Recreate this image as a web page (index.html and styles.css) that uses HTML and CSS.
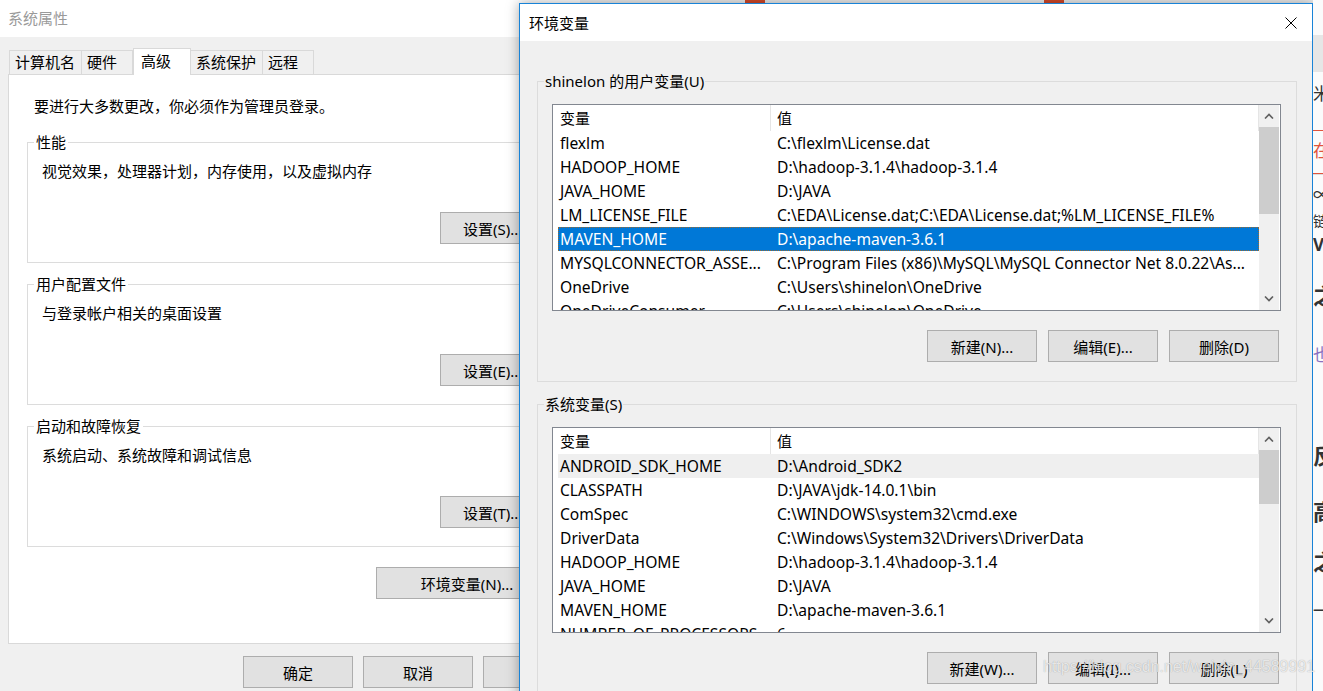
FILE: index.html
```html
<!DOCTYPE html>
<html lang="zh-CN">

<head>
    <meta charset="UTF-8">
    <title>环境变量</title>
    <link rel="stylesheet" href="styles.css">
</head>

<body>
    <div class="mark mark-a"></div>
    <div class="mark mark-b"></div>

    <!-- 系统属性 (background window) -->
    <section class="win sysprops">
        <div class="titlebar">系统属性</div>
        <div class="tabs">
            <span class="tab">计算机名</span>
            <span class="tab">硬件</span>
            <span class="tab on">高级</span>
            <span class="tab">系统保护</span>
            <span class="tab">远程</span>
        </div>
        <div class="panel">
            <p class="note">要进行大多数更改，你必须作为管理员登录。</p>

            <fieldset class="grp">
                <legend>性能</legend>
                <div class="grp-body">
                    <p class="desc">视觉效果，处理器计划，内存使用，以及虚拟内存</p>
                    <div class="btnrow"><button class="btn set">设置(S)...</button></div>
                </div>
            </fieldset>

            <fieldset class="grp">
                <legend>用户配置文件</legend>
                <div class="grp-body">
                    <p class="desc">与登录帐户相关的桌面设置</p>
                    <div class="btnrow"><button class="btn set">设置(E)...</button></div>
                </div>
            </fieldset>

            <fieldset class="grp">
                <legend>启动和故障恢复</legend>
                <div class="grp-body">
                    <p class="desc">系统启动、系统故障和调试信息</p>
                    <div class="btnrow"><button class="btn set">设置(T)...</button></div>
                </div>
            </fieldset>

            <div class="envrow"><button class="btn env">环境变量(N)...</button></div>
        </div>
        <div class="footer">
            <button class="btn">确定</button>
            <button class="btn">取消</button>
            <button class="btn apply">应用(A)</button>
        </div>
    </section>

    <!-- 环境变量 dialog -->
    <section class="win envdlg">
        <div class="dlg-title">
            <span>环境变量</span>
            <svg class="close" width="12" height="12" viewBox="0 0 12 12">
                <path d="M0.5 0.5 L11.5 11.5 M11.5 0.5 L0.5 11.5" stroke="#000" stroke-width="1" fill="none" />
            </svg>
        </div>
        <div class="dlg-body">
            <fieldset class="vars">
                <legend>shinelon 的用户变量(U)</legend>
                <div class="vars-body">
                    <div class="list user">
                        <div class="cols">
                            <div class="lrow head"><span>变量</span><span>值</span></div>
                            <div class="lrow"><span>flexlm</span><span>C:\flexlm\License.dat</span></div>
                            <div class="lrow"><span>HADOOP_HOME</span><span>D:\hadoop-3.1.4\hadoop-3.1.4</span></div>
                            <div class="lrow"><span>JAVA_HOME</span><span>D:\JAVA</span></div>
                            <div class="lrow"><span>LM_LICENSE_FILE</span><span>C:\EDA\License.dat;C:\EDA\License.dat;%LM_LICENSE_FILE%</span></div>
                            <div class="lrow sel"><span>MAVEN_HOME</span><span>D:\apache-maven-3.6.1</span></div>
                            <div class="lrow"><span>MYSQLCONNECTOR_ASSE...</span><span>C:\Program Files (x86)\MySQL\MySQL Connector Net 8.0.22\As...</span></div>
                            <div class="lrow"><span>OneDrive</span><span>C:\Users\shinelon\OneDrive</span></div>
                            <div class="lrow"><span>OneDriveConsumer</span><span>C:\Users\shinelon\OneDrive</span></div>
                        </div>
                        <div class="sb">
                            <div class="arrow"><svg width="10" height="6" viewBox="0 0 10 6"><path d="M1 5.5 L5 1.5 L9 5.5" stroke="#606060" stroke-width="1.6" fill="none" /></svg></div>
                            <div class="track"><div class="thumb t-user"></div></div>
                            <div class="arrow"><svg width="10" height="6" viewBox="0 0 10 6"><path d="M1 0.5 L5 4.5 L9 0.5" stroke="#606060" stroke-width="1.6" fill="none" /></svg></div>
                        </div>
                    </div>
                    <div class="btnrow dlg-btns">
                        <button class="btn">新建(N)...</button>
                        <button class="btn">编辑(E)...</button>
                        <button class="btn">删除(D)</button>
                    </div>
                </div>
            </fieldset>

            <fieldset class="vars sys">
                <legend>系统变量(S)</legend>
                <div class="vars-body">
                    <div class="list system">
                        <div class="cols">
                            <div class="lrow head"><span>变量</span><span>值</span></div>
                            <div class="lrow hover"><span>ANDROID_SDK_HOME</span><span>D:\Android_SDK2</span></div>
                            <div class="lrow"><span>CLASSPATH</span><span>D:\JAVA\jdk-14.0.1\bin</span></div>
                            <div class="lrow"><span>ComSpec</span><span>C:\WINDOWS\system32\cmd.exe</span></div>
                            <div class="lrow"><span>DriverData</span><span>C:\Windows\System32\Drivers\DriverData</span></div>
                            <div class="lrow"><span>HADOOP_HOME</span><span>D:\hadoop-3.1.4\hadoop-3.1.4</span></div>
                            <div class="lrow"><span>JAVA_HOME</span><span>D:\JAVA</span></div>
                            <div class="lrow"><span>MAVEN_HOME</span><span>D:\apache-maven-3.6.1</span></div>
                            <div class="lrow"><span>NUMBER_OF_PROCESSORS</span><span>6</span></div>
                        </div>
                        <div class="sb">
                            <div class="arrow"><svg width="10" height="6" viewBox="0 0 10 6"><path d="M1 5.5 L5 1.5 L9 5.5" stroke="#606060" stroke-width="1.6" fill="none" /></svg></div>
                            <div class="track"><div class="thumb t-sys"></div></div>
                            <div class="arrow"><svg width="10" height="6" viewBox="0 0 10 6"><path d="M1 0.5 L5 4.5 L9 0.5" stroke="#606060" stroke-width="1.6" fill="none" /></svg></div>
                        </div>
                    </div>
                    <div class="btnrow dlg-btns">
                        <button class="btn">新建(W)...</button>
                        <button class="btn">编辑(I)...</button>
                        <button class="btn">删除(L)</button>
                    </div>
                </div>
            </fieldset>
        </div>
    </section>

    <!-- sliver of the window behind, right edge -->
    <div class="edge">
        <div class="edge-top"></div>
        <span class="e1">米</span>
        <span class="eline red"></span>
        <span class="e2 red-t">在</span>
        <span class="eline red"></span>
        <span class="eline grey"></span>
        <span class="e3">∞</span>
        <span class="e4">链</span>
        <span class="e5 bold">V</span>
        <span class="e6 bold">之</span>
        <span class="e7 purple">也</span>
        <span class="e8 bold">反</span>
        <span class="e9 bold">高</span>
        <span class="e10 bold">之</span>
        <span class="e11">一</span>
    </div>

    <div class="watermark">https://blog.csdn.net/weixin_44589991</div>
</body>

</html>
```

FILE: styles.css
```css
* {
    box-sizing: border-box;
}

body {
    margin: 0;
    width: 1323px;
    height: 691px;
    overflow: hidden;
    position: relative;
    background-color: #ececec;
    font-family: "Noto Sans", "Noto Sans CJK SC", sans-serif;
    font-size: 15px;
    color: #000000;
}

p {
    margin: 0;
}

.mark {
    position: absolute;
    top: 0;
    height: 3px;
    width: 20px;
    background-color: #d2492a;
}

.mark-a {
    left: 745px;
}

.mark-b {
    left: 1044px;
}

.win {
    position: absolute;
}

/* ---------- 系统属性 ---------- */

.sysprops {
    left: 0;
    top: 0;
    width: 580px;
    height: 691px;
    background-color: #f0f0f0;
}

.sysprops .titlebar {
    height: 37px;
    line-height: 37px;
    padding-left: 8px;
    background-color: #ffffff;
    color: #9a9a9a;
}

.tabs {
    display: flex;
    align-items: flex-end;
    height: 26px;
    margin: 11px 0 0 9px;
    position: relative;
    z-index: 1;
}

.tab {
    height: 24px;
    line-height: 22px;
    min-width: 52px;
    padding: 0 6px 0 5px;
    margin-left: -1px;
    border: 1px solid #d9d9d9;
    border-bottom: none;
    background-color: #f0f0f0;
}

.tab:first-child {
    margin-left: 0;
}

.tab.on {
    height: 27px;
    line-height: 24px;
    min-width: 58px;
    margin-left: 0;
    margin-bottom: -1px;
    padding-left: 7px;
    background-color: #ffffff;
}

.panel {
    height: 570px;
    margin: 0 8px;
    padding: 21px 18px 0 18px;
    background-color: #ffffff;
    border: 1px solid #d9d9d9;
}

.note {
    margin-left: 7px;
    line-height: 20px;
}

.grp {
    margin: 16px 0 0 0;
    padding: 0;
    min-width: 0;
    border: 1px solid #dcdcdc;
}

.grp + .grp {
    margin-top: 11px;
}

.grp legend {
    margin-left: 6px;
    padding: 0 2px;
    line-height: 20px;
}

.grp-body {
    padding: 9px 8px 18px 14px;
}

.desc {
    line-height: 20px;
}

.btnrow {
    display: flex;
    justify-content: flex-end;
    margin-top: 31px;
}

.btn {
    flex-shrink: 0;
    height: 32px;
    width: 110px;
    padding: 0;
    font-family: inherit;
    font-size: 15px;
    color: #000000;
    background-color: #e1e1e1;
    border: 1px solid #adadad;
    border-radius: 0;
}

.btn.set {
    width: 104px;
    text-align: left;
    padding-left: 22px;
}

.btn.apply {
    text-align: left;
    padding-left: 38px;
}

.envrow {
    margin-top: 20px;
    padding-left: 349px;
}

.btn.env {
    width: 182px;
}

.footer {
    display: flex;
    gap: 10px;
    margin-top: 12px;
    padding-left: 243px;
}

/* ---------- 环境变量 dialog ---------- */

.envdlg {
    left: 519px;
    top: 3px;
    width: 794px;
    height: 720px;
    background-color: #f0f0f0;
    border: 1px solid #1883d7;
    box-shadow: 0 0 12px rgba(0, 0, 0, 0.35);
}

.dlg-title {
    height: 37px;
    display: flex;
    align-items: center;
    justify-content: space-between;
    padding: 0 15px 0 9px;
    background-color: #ffffff;
}

.dlg-body {
    padding: 30px 15px 0 17px;
}

.vars {
    margin: 0;
    padding: 0;
    min-width: 0;
    border: 1px solid #dcdcdc;
}

.vars.sys {
    margin-top: 12px;
}

.vars legend {
    margin-left: 6px;
    padding: 0 1px;
    line-height: 20px;
}

.vars-body {
    padding: 13px 15px 19px 14px;
}

.list {
    display: flex;
    background-color: #ffffff;
    border: 1px solid #828790;
    overflow: hidden;
    font-size: 15.6px;
}

.list.user {
    height: 207px;
}

.list.system {
    height: 206px;
}

.cols {
    flex: 1;
    overflow: hidden;
}

.lrow {
    display: grid;
    grid-template-columns: 213px 1fr;
    height: 24px;
    line-height: 23px;
    margin-left: 5px;
    white-space: nowrap;
}

.lrow span {
    overflow: hidden;
    padding: 1px 0 0 2px;
}

.lrow span + span {
    padding-left: 6px;
}

.lrow.head {
    height: 26px;
    line-height: 25px;
    font-size: 15px;
}

.lrow.head span {
    border-right: 1px solid #e5e5e5;
}

.lrow.sel {
    background-color: #0078d7;
    color: #ffffff;
    outline: 1px dotted #9a6a30;
    outline-offset: -1px;
}

.lrow.hover {
    background-color: #efefef;
}

.sb {
    width: 20px;
    margin-right: 1px;
    display: flex;
    flex-direction: column;
    background-color: #f0f0f0;
}

.arrow {
    height: 22px;
    display: flex;
    align-items: center;
    justify-content: center;
}

.track {
    flex: 1;
}

.thumb {
    background-color: #cdcdcd;
}

.t-user {
    height: 87px;
}

.t-sys {
    height: 54px;
}

.dlg-btns {
    gap: 11px;
    margin-top: 19px;
    padding-right: 2px;
}

/* ---------- right sliver ---------- */

.edge {
    position: absolute;
    left: 1313px;
    top: 0;
    width: 10px;
    height: 691px;
    overflow: hidden;
    background-color: #fbfbfb;
    display: flex;
    flex-direction: column;
    font-size: 17px;
    line-height: 20px;
    color: #333333;
}

.edge-top {
    height: 37px;
    margin-top: 35px;
    background-color: #e6e6e6;
    margin-bottom: 12px;
    flex-shrink: 0;
}

.edge span {
    display: block;
    white-space: nowrap;
    flex-shrink: 0;
}

.eline {
    height: 1px;
    width: 10px;
}

.eline.red {
    background-color: #e0543c;
}

.eline.grey {
    background-color: #dddddd;
}

.e1 {
    margin-bottom: 26px;
}

.e2 {
    margin: 10px 0 12px;
}

.red-t {
    color: #e0543c;
}

.e3 {
    margin-top: 12px;
    line-height: 16px;
}

.e4 {
    margin-top: 8px;
    font-size: 15px;
}

.bold {
    font-weight: 700;
}

.e5 {
    margin-top: 4px;
}

.e6 {
    margin-top: 30px;
    font-size: 22px;
}

.e7 {
    margin-top: 40px;
}

.purple {
    color: #8a70c0;
}

.e8 {
    margin-top: 80px;
    font-size: 22px;
}

.e9 {
    margin-top: 36px;
    font-size: 22px;
}

.e10 {
    margin-top: 30px;
    font-size: 22px;
}

.e11 {
    margin-top: 30px;
}

.watermark {
    position: absolute;
    left: 1043px;
    top: 658px;
    font-family: "Liberation Sans", sans-serif;
    font-size: 16px;
    color: rgba(255, 255, 255, 0.75);
    text-shadow: 0 0 1px rgba(0, 0, 0, 0.35);
    white-space: nowrap;
}
```
